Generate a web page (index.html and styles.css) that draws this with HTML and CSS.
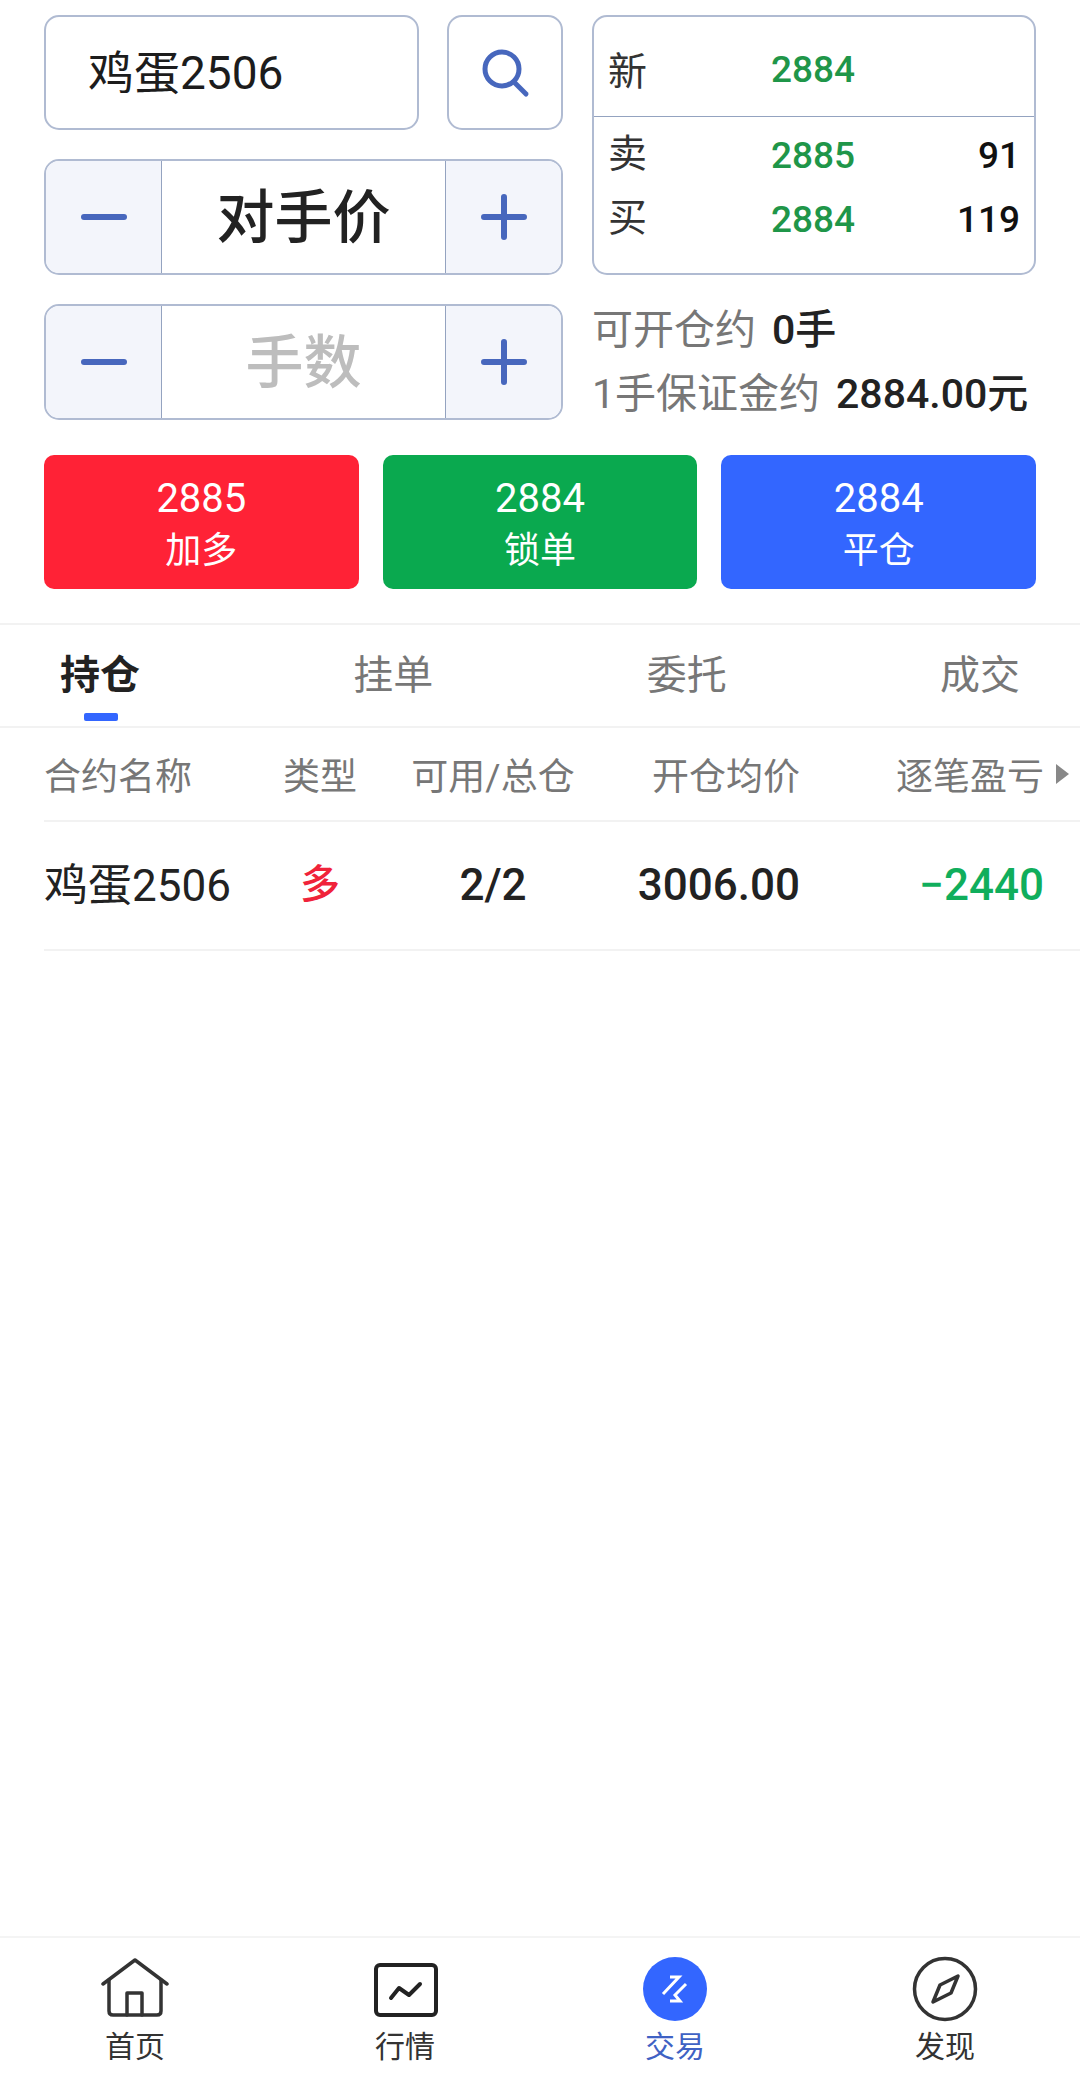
FILE: index.html
```html
<!DOCTYPE html>
<html lang="zh-CN">
  <head>
    <meta charset="UTF-8" />
    <title>交易</title>
    <link rel="stylesheet" href="styles.css">
  </head>
  <body>
    <main class="main">
      <section class="order">
        <div class="order-left">
          <div class="search-row">
            <div class="box search-input"><span>鸡蛋2506</span></div>
            <div class="box search-btn">
              <svg width="52" height="52" viewBox="0 0 52 52" fill="none" stroke="#4767bd" stroke-width="5" stroke-linecap="round"><circle cx="23" cy="22" r="17"/><path d="M35 35 L47 47"/></svg>
            </div>
          </div>
          <div class="box stepper">
            <div class="step">
              <svg width="46" height="46" viewBox="0 0 46 46" stroke="#4767bd" stroke-width="6" stroke-linecap="round"><path d="M3 23 H43"/></svg>
            </div>
            <div class="step-value price">对手价</div>
            <div class="step">
              <svg width="46" height="46" viewBox="0 0 46 46" stroke="#4767bd" stroke-width="6" stroke-linecap="round"><path d="M3 23 H43 M23 3 V43"/></svg>
            </div>
          </div>
          <div class="box stepper">
            <div class="step">
              <svg width="46" height="46" viewBox="0 0 46 46" stroke="#4767bd" stroke-width="6" stroke-linecap="round"><path d="M3 23 H43"/></svg>
            </div>
            <div class="step-value hands">手数</div>
            <div class="step">
              <svg width="46" height="46" viewBox="0 0 46 46" stroke="#4767bd" stroke-width="6" stroke-linecap="round"><path d="M3 23 H43 M23 3 V43"/></svg>
            </div>
          </div>
        </div>
        <div class="order-right">
          <div class="box quote">
            <div class="quote-new">
              <span class="q-label">新</span>
              <span class="q-price">2884</span>
              <span class="q-size"></span>
            </div>
            <div class="quote-book">
              <div class="quote-row">
                <span class="q-label">卖</span>
                <span class="q-price">2885</span>
                <span class="q-size">91</span>
              </div>
              <div class="quote-row">
                <span class="q-label">买</span>
                <span class="q-price">2884</span>
                <span class="q-size">119</span>
              </div>
            </div>
          </div>
          <div class="info">
            <div class="info-line">可开仓约<b>0手</b></div>
            <div class="info-line">1手保证金约<b>2884.00元</b></div>
          </div>
        </div>
      </section>

      <section class="actions">
        <div class="action red"><span class="action-num">2885</span><span>加多</span></div>
        <div class="action green"><span class="action-num">2884</span><span>锁单</span></div>
        <div class="action blue"><span class="action-num">2884</span><span>平仓</span></div>
      </section>

      <nav class="tabs">
        <div class="tab active">持仓</div>
        <div class="tab">挂单</div>
        <div class="tab">委托</div>
        <div class="tab">成交</div>
      </nav>

      <div class="table">
        <div class="table-row table-head">
          <div>合约名称</div>
          <div class="center">类型</div>
          <div class="center">可用/总仓</div>
          <div class="right">开仓均价</div>
          <div class="right">逐笔盈亏</div>
          <div class="arrow"></div>
        </div>
        <div class="table-row table-body">
          <div class="name">鸡蛋2506</div>
          <div class="center long">多</div>
          <div class="center">2/2</div>
          <div class="right">3006.00</div>
          <div class="right loss">−2440</div>
          <div></div>
        </div>
      </div>
    </main>

    <footer class="tabbar">
      <div class="tabbar-item">
        <svg width="68" height="68" viewBox="0 0 68 68" fill="none" stroke="#333" stroke-width="3.5" stroke-linejoin="round" stroke-linecap="round"><path d="M2 29 L34 5 L66 29"/><path d="M8 25 V56 Q8 60 12 60 H56 Q60 60 60 56 V25"/><path d="M26 60 V38 H41 V60"/></svg>
        <span>首页</span>
      </div>
      <div class="tabbar-item">
        <svg width="68" height="68" viewBox="0 0 68 68" fill="none" stroke="#222" stroke-linecap="round" stroke-linejoin="round"><rect x="5" y="10" width="60" height="50" rx="4" stroke-width="4"/><path d="M20 43 L28 33 L38 40 L49 29" stroke-width="4"/></svg>
        <span>行情</span>
      </div>
      <div class="tabbar-item current">
        <svg width="68" height="68" viewBox="0 0 68 68"><circle cx="34" cy="34" r="32" fill="#3366ff"/><path d="M29 22 H38 L22 39 M45 29 L34 40 L39 46 H29" fill="none" stroke="#fff" stroke-width="3"/></svg>
        <span>交易</span>
      </div>
      <div class="tabbar-item">
        <svg width="68" height="68" viewBox="0 0 68 68" fill="none" stroke="#333"><circle cx="34" cy="34" r="30.5" stroke-width="3.5"/><path d="M47 21 L40 38 L22 47 L29 30 Z" stroke-width="3.5" stroke-linejoin="round"/></svg>
        <span>发现</span>
      </div>
    </footer>
  </body>
</html>
```

FILE: styles.css
```css
* {
  box-sizing: border-box;
}

html,
body {
  margin: 0;
  padding: 0;
}

body {
  width: 1080px;
  height: 2082px;
  display: flex;
  flex-direction: column;
  background: #fff;
  color: #222;
  font-family: Roboto, 'Noto Sans CJK SC', sans-serif;
  overflow: hidden;
}

.main {
  flex: 1;
}

.box {
  border: 2px solid #b0bbd2;
  border-radius: 15px;
  background: #fff;
}

.order {
  display: flex;
  justify-content: space-between;
  padding: 15px 44px 0;
}

.order-left {
  width: 519px;
  display: flex;
  flex-direction: column;
  gap: 29px;
}

.search-row {
  display: flex;
  justify-content: space-between;
}

.search-input {
  width: 375px;
  height: 115px;
  padding: 0 0 8px 42px;
  display: flex;
  align-items: center;
  font-size: 46px;
  color: #1c1c1c;
}

.search-btn {
  width: 116px;
  height: 115px;
  display: flex;
  align-items: center;
  justify-content: center;
}

.stepper {
  height: 116px;
  display: flex;
  overflow: hidden;
}

.step {
  width: 115px;
  background: #f3f5fb;
  display: flex;
  align-items: center;
  justify-content: center;
}

.step-value {
  flex: 1;
  display: flex;
  align-items: center;
  justify-content: center;
  padding-bottom: 8px;
  border-left: 1px solid #94a3c0;
  border-right: 1px solid #94a3c0;
  font-size: 58px;
}

.price {
  color: #222;
  font-weight: 500;
}

.hands {
  color: #bdbdbd;
  font-weight: 500;
}

.order-right {
  width: 444px;
}

.quote {
  height: 260px;
  display: flex;
  flex-direction: column;
}

.quote-new {
  height: 100px;
  padding: 6px 14px 0;
  display: flex;
  align-items: center;
  border-bottom: 1px solid #94a3c0;
}

.quote-book {
  padding: 6px 14px 0;
}

.quote-row {
  height: 64px;
  display: flex;
  align-items: center;
}

.q-label {
  width: 163px;
  font-size: 39px;
  color: #333;
}

.quote-new .q-label {
  padding-bottom: 4px;
}

.quote-row .q-label {
  padding-bottom: 10px;
}

.q-price {
  width: 100px;
  font-size: 37px;
  font-weight: 500;
  color: #1f9649;
}

.q-size {
  flex: 1;
  text-align: right;
  font-size: 37px;
  font-weight: 500;
  color: #111;
}

.info {
  padding-top: 19px;
}

.info-line {
  height: 64px;
  display: flex;
  align-items: center;
  font-size: 41px;
  color: #777;
}

.info-line b {
  margin-left: 16px;
  font-weight: 500;
  color: #222;
}

.actions {
  display: flex;
  gap: 24px;
  padding: 33px 44px 0;
}

.action {
  flex: 1;
  height: 134px;
  padding-top: 5px;
  border-radius: 10px;
  display: flex;
  flex-direction: column;
  align-items: center;
  justify-content: center;
  color: #fff;
  font-size: 36px;
  line-height: 52px;
}

.action-num {
  font-size: 40px;
}

.red {
  background: #ff2236;
}

.green {
  background: #0aa94f;
}

.blue {
  background: #3366ff;
}

.tabs {
  margin-top: 34px;
  height: 105px;
  padding: 0 60px;
  display: flex;
  justify-content: space-between;
  border-top: 2px solid #f2f2f2;
  border-bottom: 2px solid #f2f2f2;
}

.tab {
  position: relative;
  display: flex;
  align-items: center;
  padding-bottom: 7px;
  font-size: 40px;
  color: #777;
}

.tab.active {
  color: #222;
  font-weight: 700;
}

.tab.active::after {
  content: '';
  position: absolute;
  left: 24px;
  bottom: 5px;
  width: 34px;
  height: 8px;
  border-radius: 2px;
  background: #3366ff;
}

.table {
  padding-left: 44px;
}

.table-row {
  display: grid;
  grid-template-columns: 216px 120px 226px 194px 244px 36px;
  align-items: center;
  border-bottom: 2px solid #f2f2f2;
}

.table-head {
  height: 94px;
  font-size: 37px;
  color: #777;
}

.table-body {
  height: 129px;
  padding-bottom: 2px;
  font-size: 44px;
  font-weight: 500;
  color: #222;
}

.table-body .name {
  padding-bottom: 6px;
  font-weight: 400;
  white-space: nowrap;
}

.center {
  text-align: center;
}

.right {
  text-align: right;
}

.table-body .long {
  padding-bottom: 8px;
  font-size: 40px;
  color: #f0233a;
}

.loss {
  color: #10ae5c;
}

.arrow {
  justify-self: end;
  margin-right: 11px;
  width: 0;
  height: 0;
  border-left: 13px solid #888;
  border-top: 10px solid transparent;
  border-bottom: 10px solid transparent;
}

.tabbar {
  height: 146px;
  display: grid;
  grid-template-columns: 270px 270px 270px 270px;
  border-top: 2px solid #f4f4f4;
}

.tabbar-item {
  display: flex;
  flex-direction: column;
  align-items: center;
  padding-top: 17px;
  font-size: 30px;
  color: #333;
}

.tabbar-item svg {
  display: block;
}

.tabbar-item span {
  margin-top: 4px;
  line-height: 40px;
}

.current {
  color: #3f62c4;
}
```
